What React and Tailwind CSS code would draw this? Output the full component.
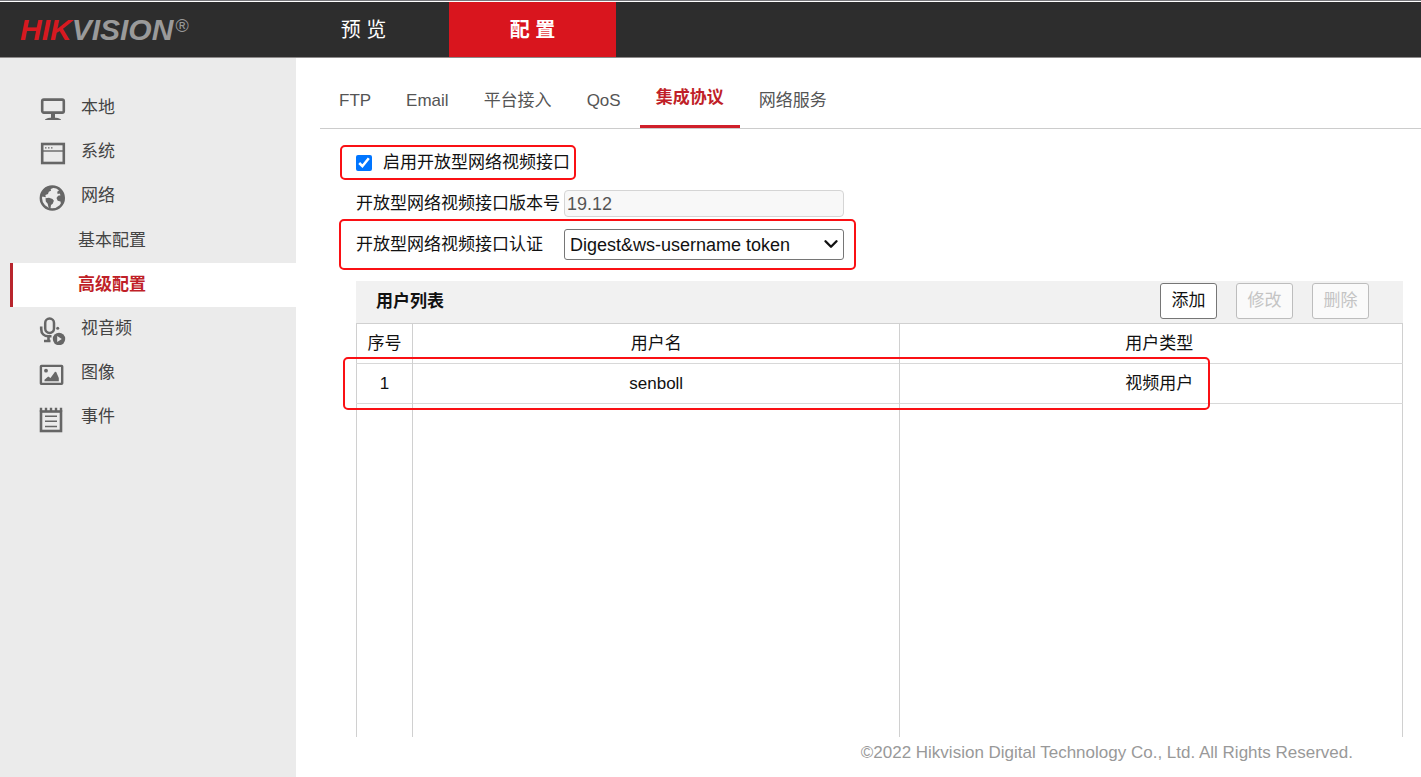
import { useState } from "react";
import { ChevronDown } from "lucide-react";

const MonitorIcon = () => (
  <svg className="h-8 w-7 shrink-0" viewBox="0 0 28 32" fill="none" stroke="#666" aria-hidden="true">
    <rect x="4.2" y="7.6" width="21.6" height="13" rx="1.6" strokeWidth="2.6" />
    <path d="M15 21v5" strokeWidth="4" />
    <path d="M7 28v-.6c1.5-1 4-1.9 8-1.9s6.5.9 8 1.9v.6z" fill="#666" stroke="none" />
  </svg>
);

const WindowIcon = () => (
  <svg className="h-8 w-7 shrink-0" viewBox="0 0 28 32" fill="none" stroke="#666" aria-hidden="true">
    <rect x="4.2" y="8" width="21.6" height="19" strokeWidth="2.6" />
    <path d="M4 15h22" strokeWidth="1.4" />
    <path d="M7 11.8h1.5M10 11.8h1.5M13 11.8h1.5" strokeWidth="1.3" />
  </svg>
);

const GlobeIcon = () => (
  <svg className="h-8 w-7 shrink-0" viewBox="0 0 28 32" aria-hidden="true">
    <circle cx="14.3" cy="18" r="11.5" fill="none" stroke="#666" strokeWidth="2.4" />
    <path d="M3.5 16.5 5 10l5-3.500 5.500.2-.8 1.600-2 .7.300 1.700-2.200 1-.8 2.300-2.600 1 .4 2.200-2.300-.4z" fill="#666" />
    <path d="m7.5 18.300 3.500-.6 3.500 1.300 1.400 1.700-1.200 3-1.700 1.300-.5 3.400-1.900-.7-.9-4-1.900-2.300z" fill="#666" />
    <path
      d="m20.5 9 3 2 2.500 5.500.2 3.500-1.700 5-1.400-.2-.6-3.300-2.800-.7-1.200-2.700 1.600-2.300 2.500-.6-1-1.600-2 .3-.4-2.200 1.600-1z"
      fill="#666"
    />
  </svg>
);

const AudioVideoIcon = () => (
  <svg className="h-8 w-7 shrink-0" viewBox="0 0 28 32" fill="none" stroke="#666" aria-hidden="true">
    <rect x="7.2" y="5.6" width="8.8" height="14.4" rx="4.4" strokeWidth="2.5" />
    <path d="M3.2 13.5V16c0 4.5 3 7.3 7.3 7.3h3" strokeWidth="2.6" />
    <path d="M10.5 22.5V28M6 28h6.5" strokeWidth="2.6" />
    <circle cx="19.7" cy="15.3" r="1.5" fill="#666" stroke="none" />
    <circle cx="21" cy="26" r="6.2" fill="#666" stroke="none" />
    <path d="M19.2 22.9v6.2l4.6-3.1z" fill="#ebebeb" stroke="none" />
  </svg>
);

const ImageIcon = () => (
  <svg className="h-8 w-7 shrink-0" viewBox="0 0 28 32" fill="#666" aria-hidden="true">
    <rect x="2.9" y="8.9" width="21.3" height="18" rx="0.6" fill="none" stroke="#666" strokeWidth="2.4" />
    <circle cx="8" cy="13.7" r="1.9" />
    <path d="M6.5 24.3v-1.5l3.7-3.3 2.3 1.4 4.5-6.2 1.2.2 2.6 6v3.4z" />
  </svg>
);

const EventIcon = () => (
  <svg className="h-8 w-7 shrink-0" viewBox="0 0 28 32" fill="none" stroke="#666" aria-hidden="true">
    <rect x="3" y="10.5" width="20" height="19.5" strokeWidth="2.6" />
    <path d="M3 6.8v4M8 6.8v4M13 6.8v4M18 6.8v4M23 6.8v4" strokeWidth="2.4" />
    <path d="M7 15.2h12M7 20.3h12M7 25.5h12" strokeWidth="1.5" />
  </svg>
);

const menu = [
  { name: "本地", icon: MonitorIcon },
  { name: "系统", icon: WindowIcon },
  { name: "网络", icon: GlobeIcon, children: ["基本配置", "高级配置"] },
  { name: "视音频", icon: AudioVideoIcon },
  { name: "图像", icon: ImageIcon },
  { name: "事件", icon: EventIcon },
];

const tabs = ["FTP", "Email", "平台接入", "QoS", "集成协议", "网络服务"];

const users = [{ id: 1, name: "senboll", type: "视频用户" }];

const Header = () => (
  <header className="border-t border-[#77777c] bg-white pt-px">
    <div className="flex h-14 items-stretch border-b border-[#8d8a8a] bg-[#2d2d2d]">
      <a href="#" className="flex w-[282px] items-center pl-5 text-[30px] font-bold italic leading-none">
        <span className="text-[#d71920]">HIK</span>
        <span className="text-[#9a9a9a]">VISION</span>
        <span className="mb-2 ml-0.5 text-lg font-normal not-italic text-[#9a9a9a]">®</span>
      </a>
      <nav className="flex text-xl text-white">
        <a href="#" className="flex w-[167px] items-center justify-center pr-1">
          预 览
        </a>
        <a href="#" className="flex w-[167px] items-center justify-center bg-[#d9151e] font-bold">
          配 置
        </a>
      </nav>
    </div>
  </header>
);

const Sidebar = () => (
  <aside className="w-[296px] shrink-0 bg-[#ebebeb] pt-7 pl-[10px] text-[#444]">
    <ul>
      {menu.map(({ name, icon: Icon, children }) => (
        <li key={name}>
          <a href="#" className="flex h-11 items-center gap-[15px] pl-7">
            <Icon />
            {name}
          </a>
          {children && (
            <ul className="pt-px">
              {children.map((child) => (
                <li key={child}>
                  <a
                    href="#"
                    className={
                      child === "高级配置"
                        ? "flex h-11 items-center border-l-3 border-[#b8252d] bg-white pl-[65px] font-bold text-[#c01f28]"
                        : "flex h-11 items-center border-l-3 border-transparent pl-[65px]"
                    }
                  >
                    {child}
                  </a>
                </li>
              ))}
            </ul>
          )}
        </li>
      ))}
    </ul>
  </aside>
);

const Highlight = ({ className }) => (
  <div className={`pointer-events-none absolute rounded-[5px] border-2 border-[#fa1014] ${className}`} />
);

const UserList = () => (
  <section className="relative mt-[21px] mr-[18px]">
    <div className="flex h-[42px] items-start justify-between bg-[#f1f1f1] pt-0.5 pr-[34px] pl-5">
      <h2 className="font-bold leading-[38px]">用户列表</h2>
      <div className="flex gap-[19px]">
        <button className="h-9 w-[57px] rounded-[3px] border border-[#767676] bg-white">添加</button>
        <button disabled className="h-9 w-[57px] rounded-[3px] border border-[#bdbdbd] bg-[#fafafa] text-[#c4c4c4]">
          修改
        </button>
        <button disabled className="h-9 w-[57px] rounded-[3px] border border-[#bdbdbd] bg-[#fafafa] text-[#c4c4c4]">
          删除
        </button>
      </div>
    </div>
    <table className="w-full table-fixed border-x border-t border-[#d0d0d0] text-center">
      <thead>
        <tr className="h-10 border-b border-[#d8d8d8]">
          <th className="w-14 border-r border-[#d0d0d0] font-normal">序号</th>
          <th className="w-[46.6%] border-r border-[#d0d0d0] font-normal">用户名</th>
          <th className="pl-4 font-normal">用户类型</th>
        </tr>
      </thead>
      <tbody>
        {users.map((user) => (
          <tr key={user.id} className="h-10 border-b border-[#d8d8d8]">
            <td className="border-r border-[#d0d0d0]">{user.id}</td>
            <td className="border-r border-[#d0d0d0]">{user.name}</td>
            <td className="pl-4">{user.type}</td>
          </tr>
        ))}
        <tr className="h-[333px]">
          <td className="border-r border-[#d0d0d0]" />
          <td className="border-r border-[#d0d0d0]" />
          <td />
        </tr>
      </tbody>
    </table>
    <Highlight className="top-[76px] right-[193px] -left-[13px] h-[53px]" />
  </section>
);

export default function App() {
  const [enabled, setEnabled] = useState(true);
  const [auth, setAuth] = useState("Digest&ws-username token");

  return (
    <div className="flex min-h-screen flex-col bg-white font-['Liberation_Sans','Noto_Sans_CJK_SC',sans-serif] text-[17px] leading-6 text-[#111]">
      <Header />
      <div className="flex flex-1">
        <Sidebar />
        <main className="min-w-0 flex-1 pl-6">
          <nav className="flex h-[71px] items-end gap-[3px] border-b border-[#ccc] pl-[3px] text-[#555]">
            {tabs.map((tab) => (
              <a
                key={tab}
                href="#"
                className={
                  tab === "集成协议"
                    ? "flex h-[57px] items-center border-b-3 border-[#d0202a] px-4 font-bold text-[#c01f28]"
                    : "flex h-[54px] items-center px-4"
                }
              >
                {tab}
              </a>
            ))}
          </nav>

          <div className="pl-9">
            <form>
              <div className="relative mt-4 flex h-[35px] w-fit items-center">
                <input
                  id="enable"
                  type="checkbox"
                  className="size-4"
                  checked={enabled}
                  onChange={(e) => setEnabled(e.target.checked)}
                />
                <label htmlFor="enable" className="pl-[11px]">
                  启用开放型网络视频接口
                </label>
                <Highlight className="inset-y-0 -right-1.5 -left-4" />
              </div>
              <div className="mt-2.5 flex items-center">
                <label htmlFor="version" className="w-52 shrink-0">
                  开放型网络视频接口版本号
                </label>
                <input
                  id="version"
                  className="h-[27px] w-[280px] rounded-sm border border-[#d5d5d5] bg-[#f8f8f8] px-0.5 text-lg text-[#555]"
                  defaultValue="19.12"
                  disabled
                />
              </div>
              <div className="relative mt-3 flex w-fit items-center">
                <label htmlFor="auth" className="w-52 shrink-0">
                  开放型网络视频接口认证
                </label>
                <div className="relative">
                  <select
                    id="auth"
                    className="block h-[31px] w-[280px] appearance-none rounded-[3px] border border-[#767676] bg-white pr-7 pl-[5px] text-lg"
                    value={auth}
                    onChange={(e) => setAuth(e.target.value)}
                  >
                    <option>Digest&ws-username token</option>
                    <option>Digest</option>
                  </select>
                  <ChevronDown
                    className="pointer-events-none absolute top-1 right-0.5 size-[22px]"
                    strokeWidth={2.6}
                    aria-hidden="true"
                  />
                </div>
                <Highlight className="-inset-y-2.5 -right-3 -left-[17px]" />
              </div>
            </form>

            <UserList />
          </div>

          <footer className="mt-1 pr-[68px] text-right text-[#999]">
            ©2022 Hikvision Digital Technology Co., Ltd. All Rights Reserved.
          </footer>
        </main>
      </div>
    </div>
  );
}
